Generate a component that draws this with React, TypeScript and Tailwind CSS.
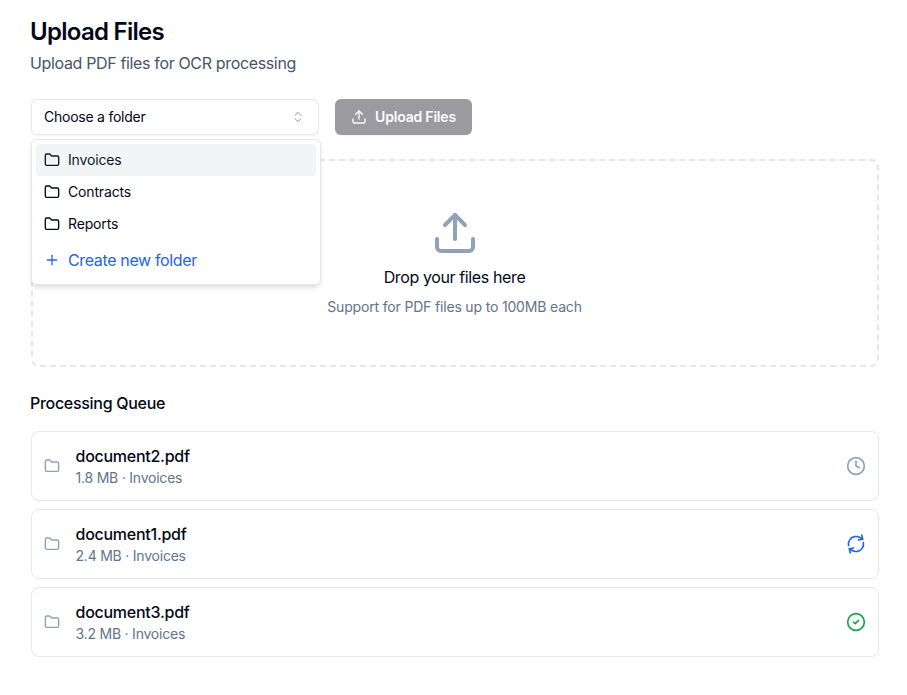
import React from "react";
import { Upload, Folder, Plus, Clock, RefreshCw, ChevronsUpDown } from "lucide-react";

const folders = ["Invoices", "Contracts", "Reports"];

const queue = [
  { name: "document2.pdf", size: "1.8 MB", status: "pending" },
  { name: "document1.pdf", size: "2.4 MB", status: "processing" },
  { name: "document3.pdf", size: "3.2 MB", status: "done" },
];

function StatusIcon({ status }: { status: string }) {
  if (status === "pending") return <Clock className="size-5 text-slate-400" />;
  if (status === "processing") return <RefreshCw className="size-5 rotate-[-12deg] text-[#2563eb]" />;
  return (
    <svg className="size-5 text-[#16a34a]" viewBox="0 0 24 24" fill="none" stroke="currentColor" strokeWidth="2" strokeLinecap="round" strokeLinejoin="round">
      <circle cx="12" cy="12" r="10" />
      <path d="m9 12 2 2 4-4" />
    </svg>
  );
}

export default function App() {
  return (
    <main className="h-[695px] w-[907px] overflow-hidden bg-white pt-4 pr-7 pl-[31px] font-['Inter',sans-serif] text-[#020817]">
      <h1 className="-ml-px text-2xl leading-8 font-semibold tracking-[-0.72px]">Upload Files</h1>
      <p className="-ml-px mt-[3px] text-base leading-6 tracking-[-0.35px] text-[#475569]">Upload PDF files for OCR processing</p>

      <div className="mt-6 flex gap-4">
        <div className="relative w-72">
          <button className="flex h-9 w-full items-center justify-between rounded-md border border-gray-200 bg-white px-3 text-sm tracking-[-0.24px] shadow-xs">
            Choose a folder
            <ChevronsUpDown className="mr-px size-3.5 opacity-50" strokeWidth={1.5} />
          </button>
          <div className="absolute top-10 left-0 z-10 h-[146px] w-[290px] rounded-md border border-gray-200 bg-white p-1 shadow-md">
            {folders.map((f, i) => (
              <div key={f} className={`flex h-8 items-center gap-2 rounded-sm px-2 text-sm tracking-[-0.15px] ${i === 0 ? "bg-gray-100 text-[#0f172a]" : ""}`}>
                <Folder className="size-4" />
                {f}
              </div>
            ))}
            <div className="flex h-10 items-center gap-2 px-2 text-base tracking-[-0.36px] text-[#2563eb]">
              <Plus className="size-4" />
              Create new folder
            </div>
          </div>
        </div>
        <button className="flex h-9 w-[137px] items-center justify-center gap-2 rounded-md bg-[#9b9b9f] text-sm font-semibold tracking-[-0.2px] text-[#fcfcfc] shadow-xs">
          <Upload className="size-4" />
          Upload Files
        </button>
      </div>

      <section className="mt-6 flex h-52 flex-col items-center rounded-lg border-2 border-dashed border-gray-200 pt-12">
        <Upload className="size-12 text-slate-400" />
        <p className="mt-2 mr-px text-base leading-6 tracking-[-0.38px]">Drop your files here</p>
        <p className="mt-2 mr-px text-sm leading-5 tracking-[-0.17px] text-slate-500">Support for PDF files up to 100MB each</p>
      </section>

      <h2 className="-ml-px mt-6 text-base leading-6 font-medium tracking-[-0.3px]">Processing Queue</h2>
      <div className="mt-4 flex flex-col gap-2">
        {queue.map((q) => (
          <div key={q.name} className="flex h-[70px] items-center rounded-lg border border-gray-200 px-3">
            <Folder className="size-4 text-slate-400" />
            <div className="ml-[15.5px] flex-1">
              <p className="text-base leading-6 font-medium tracking-[-0.26px]">{q.name}</p>
              <p className="text-sm leading-5 tracking-[-0.22px] text-slate-500">{q.size} · Invoices</p>
            </div>
            <StatusIcon status={q.status} />
          </div>
        ))}
      </div>
    </main>
  );
}
